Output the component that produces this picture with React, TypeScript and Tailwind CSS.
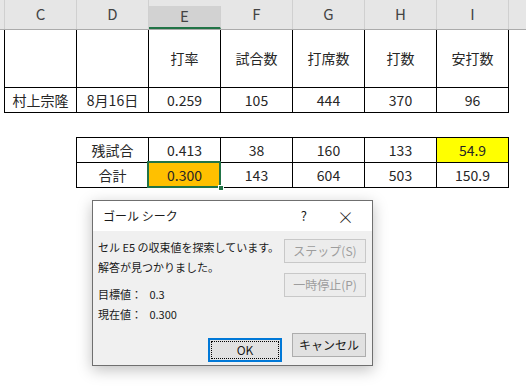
import React from 'react';

const cols = ['C', 'D', 'E', 'F', 'G', 'H', 'I'];

const row1 = ['', '', '打率', '試合数', '打席数', '打数', '安打数'];
const row2 = ['村上宗隆', '8月16日', '0.259', '105', '444', '370', '96'];

const rest = ['残試合', '0.413', '38', '160', '133', '54.9'];
const total = ['合計', '0.300', '143', '604', '503', '150.9'];

const font = { fontFamily: '"Noto Sans CJK JP", "Noto Sans", sans-serif' };

const Cell: React.FC<{ children?: React.ReactNode; h: string; className?: string }> = ({ children, h, className = '' }) => (
  <div className={`relative w-[72px] ${h} shrink-0 border-r border-b border-black flex items-center justify-center text-[14px] text-[#262626] ${className}`}>
    {children}
  </div>
);

const App: React.FC = () => {
  return (
    <div className="relative w-[526px] h-[391px] overflow-hidden bg-white" style={font}>
      {/* column header */}
      <div className="flex h-[30px] bg-[#e6e6e6] border-b border-[#ababab]">
        <div className="w-[5px] shrink-0 border-r border-[#d0d0d0]" />
        {cols.map((c) => (
          <div
            key={c}
            className={`w-[72px] shrink-0 border-r border-[#d0d0d0] flex items-center justify-center text-[15px] text-[#444] ${
              c === 'E' ? 'mt-[6px] bg-[#d2d2d2] border-b-2 border-b-[#217346] text-[#2b5a40]' : ''
            }`}
          >
            {c}
          </div>
        ))}
      </div>

      {/* player table */}
      <div className="ml-[4px] border-l border-black w-max">
        <div className="flex">
          {row1.map((v, i) => (
            <Cell key={i} h="h-[58px]">{v}</Cell>
          ))}
        </div>
        <div className="flex">
          {row2.map((v, i) => (
            <Cell key={i} h="h-[25px]">{v}</Cell>
          ))}
        </div>
      </div>

      {/* remaining table */}
      <div className="ml-[76px] mt-[24px] border-l border-t border-black w-max">
        <div className="flex">
          {rest.map((v, i) => (
            <Cell key={i} h="h-[25px]" className={i === 5 ? 'bg-[#ffff00]' : ''}>{v}</Cell>
          ))}
        </div>
        <div className="flex">
          {total.map((v, i) => (
            <Cell key={i} h="h-[25px]" className={i === 1 ? 'bg-[#ffc000] z-10' : ''}>
              {v}
              {i === 1 && (
                <>
                  <div className="absolute -left-[2px] -top-[2px] -right-[1px] -bottom-[1px] border-2 border-[#217346]" />
                  <div className="absolute -right-[4px] -bottom-[4px] w-[6px] h-[6px] bg-[#217346] border border-white" />
                </>
              )}
            </Cell>
          ))}
        </div>
      </div>

      {/* goal seek dialog */}
      <div className="absolute left-[92px] top-[200px] w-[281px] h-[166px] border border-[#6f6f6f] bg-[#f0f0f0] shadow-[0_4px_14px_rgba(0,0,0,0.25)] flex flex-col text-[#1a1a1a]">
        <div className="h-[30px] bg-white flex items-center pl-[10px] pr-[18px] text-[12px]">
          <span className="flex-1">ゴール シーク</span>
          <span className="mr-[30px] text-[13px]">?</span>
          <span className="text-[17px] font-light leading-none">×</span>
        </div>
        <div className="flex flex-1 pl-[5px] pr-[6px]">
          <div className="flex-1 text-[11px] pt-[6px]">
            <div className="h-[20px] leading-[20px] whitespace-nowrap">セル E5 の収束値を探索しています。</div>
            <div className="h-[20px] leading-[20px]">解答が見つかりました。</div>
            <div className="h-[20px] leading-[20px] mt-[7px] whitespace-pre">目標値：   0.3</div>
            <div className="h-[20px] leading-[20px] whitespace-pre">現在値：   0.300</div>
            <div className="mt-[14px] flex justify-end pr-[2px]">
              <div className="w-[74px] h-[24px] border-2 border-[#0078d7] bg-[#e1e1e1] p-[1px]">
                <div className="w-full h-full border border-dotted border-black flex items-center justify-center text-[12px]">OK</div>
              </div>
            </div>
          </div>
          <div className="w-[82px] pt-[8px] flex flex-col gap-[10px]">
            <div className="h-[24px] border border-[#c8c8c8] bg-[#ececec] text-[#9d9d9d] text-[12px] flex items-center justify-center">ステップ(S)</div>
            <div className="h-[24px] border border-[#c8c8c8] bg-[#ececec] text-[#9d9d9d] text-[12px] flex items-center justify-center">一時停止(P)</div>
            <div className="mt-[26px] self-end w-[74px] h-[24px] border border-[#adadad] bg-[#e1e1e1] text-[12px] flex items-center justify-center">キャンセル</div>
          </div>
        </div>
      </div>
    </div>
  );
};

export default App;
